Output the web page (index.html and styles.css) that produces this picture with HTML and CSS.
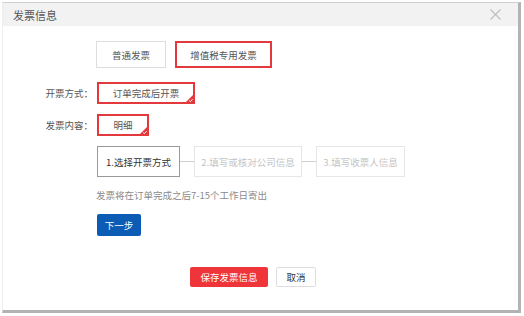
FILE: index.html
```html
<!DOCTYPE html>
<html lang="zh">
<head>
<meta charset="utf-8">
<link rel="stylesheet" href="styles.css">
</head>
<body>
<div class="dialog">
  <div class="header">
    <span class="title">发票信息</span>
    <svg class="close" width="11" height="11" viewBox="0 0 11 11"><path d="M0.5 0.5L10.5 10.5M10.5 0.5L0.5 10.5" stroke="#bdbdbd" stroke-width="1.1"/></svg>
  </div>
  <div class="body">
    <div class="tabs">
      <div class="tab">普通发票</div>
      <div class="tab tab-active">增值税专用发票</div>
    </div>
    <div class="row row-first">
      <div class="label">开票方式：</div>
      <div class="choice choice-wide">订单完成后开票<svg class="tick" width="9" height="9" viewBox="0 0 9 9"><path d="M9 0V9H0Z" fill="#e4393c"/><path d="M4.2 6.6L5.4 7.6L7.6 5.2" stroke="#fff" stroke-width="1" fill="none"/></svg></div>
    </div>
    <div class="row">
      <div class="label">发票内容：</div>
      <div class="choice choice-narrow">明细<svg class="tick" width="9" height="9" viewBox="0 0 9 9"><path d="M9 0V9H0Z" fill="#e4393c"/><path d="M4.2 6.6L5.4 7.6L7.6 5.2" stroke="#fff" stroke-width="1" fill="none"/></svg></div>
    </div>
    <div class="steps">
      <div class="step step-current">1.选择开票方式</div>
      <div class="link"></div>
      <div class="step step-two">2.填写或核对公司信息</div>
      <div class="link"></div>
      <div class="step step-three">3.填写收票人信息</div>
    </div>
    <div class="note">发票将在订单完成之后7-15个工作日寄出</div>
    <div class="next">下一步</div>
    <div class="footer">
      <div class="btn btn-save">保存发票信息</div>
      <div class="btn btn-cancel">取消</div>
    </div>
  </div>
</div>
</body>
</html>
```
FILE: styles.css
```css
* { box-sizing: border-box; }
html, body { margin: 0; padding: 0; background: #fff; }
body {
  font-family: "Noto Sans CJK SC", "Liberation Sans", sans-serif;
  font-size: 9.5px;
  color: #333;
}
.dialog {
  margin: 2px 0 0 2px;
  width: 519px;
  height: 311px;
  border-top: 1px solid #cfcfcf;
  border-left: 1px solid #eee;
  border-right: 3px solid #b3b3b3;
  border-bottom: 3px solid #b3b3b3;
  background: #fff;
}
.header {
  height: 23px;
  background: #f2f2f2;
  display: flex;
  align-items: center;
  justify-content: space-between;
  padding: 0 17px 0 10px;
}
.title { font-size: 11px; color: #555; }
.close { display: block; }
.body { padding-top: 15px; }
.tabs {
  display: flex;
  gap: 9px;
  margin-left: 93px;
}
.tab {
  height: 27px;
  width: 70px;
  border: 1px solid #ddd;
  display: flex;
  align-items: center;
  justify-content: center;
  color: #555;
}
.tab-active {
  width: 97px;
  border: 2px solid #e4393c;
}
.row {
  display: flex;
  align-items: center;
  margin-top: 10px;
}
.row-first { margin-top: 14px; }
.label {
  width: 90px;
  text-align: right;
  color: #555;
}
.choice {
  position: relative;
  margin-left: 4px;
  height: 22px;
  border: 2px solid #e4393c;
  display: flex;
  align-items: center;
  justify-content: center;
  color: #555;
}
.choice-wide { width: 98px; }
.choice-narrow { width: 52px; }
.tick {
  position: absolute;
  right: -1px;
  bottom: -1px;
  display: block;
}
.steps {
  display: flex;
  align-items: center;
  margin: 10px 0 0 94px;
}
.step {
  height: 31px;
  display: flex;
  align-items: center;
  justify-content: center;
  border: 1px solid #e6e6e6;
  color: #c4c4c4;
  white-space: nowrap;
}
.step-current {
  width: 83px;
  border-color: #999;
  color: #333;
}
.step-two { width: 108px; }
.step-three { width: 89px; }
.link {
  width: 14px;
  height: 1px;
  background: #cfcfcf;
}
.note {
  margin: 11px 0 0 93px;
  color: #8a8a8a;
  line-height: 14px;
}
.next {
  margin: 12px 0 0 94px;
  width: 44px;
  height: 22px;
  border-radius: 2px;
  background: #0c5bb5;
  color: #fff;
  display: flex;
  align-items: center;
  justify-content: center;
}
.footer {
  display: flex;
  gap: 8px;
  margin: 31px 0 0 187px;
}
.btn {
  height: 20px;
  display: flex;
  align-items: center;
  justify-content: center;
  border-radius: 2px;
}
.btn-save {
  width: 78px;
  background: #f0353a;
  color: #fff;
}
.btn-cancel {
  width: 40px;
  border: 1px solid #ddd;
  color: #333;
}
```
